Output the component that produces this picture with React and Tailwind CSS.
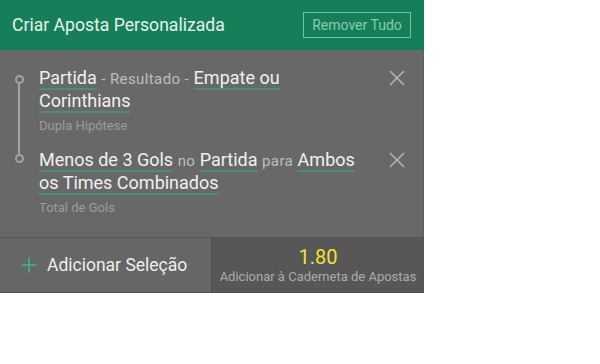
import React from 'react';

const Link = ({ children }) => (
  <span className="text-[#f0f0f0] underline decoration-[#4b8e72] decoration-2 underline-offset-[4px]">
    {children}
  </span>
);

const Muted = ({ children }) => (
  <span className="text-[15px] leading-[16px] tracking-[0.4px] text-[#bdbdbd]">{children}</span>
);

const CloseIcon = () => (
  <svg width="16" height="16" viewBox="0 0 16 16" className="shrink-0">
    <path d="M1.5 1.5 L14.5 14.5 M14.5 1.5 L1.5 14.5" stroke="#b4b4b4" strokeWidth="1.6" strokeLinecap="round" />
  </svg>
);

const Selection = ({ children, market }) => (
  <div className="flex items-start">
    <div className="w-[322px] text-[18px] leading-[23px]">
      <div>{children}</div>
      <div className="mt-[6px] text-[13px] leading-[16px] text-[#9c9c9c]">{market}</div>
    </div>
    <div className="ml-auto mr-[18px] mt-[4px]">
      <CloseIcon />
    </div>
  </div>
);

export default function App() {
  return (
    <div className="w-[600px] h-[364px] bg-white" style={{ fontFamily: 'Roboto, "Liberation Sans", sans-serif' }}>
      <div className="w-[424px]">
        <div className="h-[50px] bg-[#177e5a] flex items-center justify-between pl-[12px] pr-[13px]">
          <span className="text-[17.6px] text-[#e4f2eb]">Criar Aposta Personalizada</span>
          <button className="h-[26px] w-[108px] border border-[#74c3a0] text-[14px] text-[#86cdae]">
            Remover Tudo
          </button>
        </div>

        <div className="relative bg-[#686868] pt-[16px] pb-[21px] pl-[39px] flex flex-col gap-[14px] border-r border-[#5e5e5e]">
          <div className="absolute left-[18px] top-[28px] w-[2px] h-[80px] bg-[#a4a4a4]" />
          <div className="absolute left-[15px] top-[25px] w-[9px] h-[9px] rounded-full border-2 border-[#a4a4a4] bg-[#686868]" />
          <div className="absolute left-[15px] top-[104px] w-[9px] h-[9px] rounded-full border-2 border-[#a4a4a4] bg-[#686868]" />

          <Selection market="Dupla Hipótese">
            <Link>Partida</Link> <Muted>- Resultado -</Muted> <Link>Empate ou Corinthians</Link>
          </Selection>
          <Selection market="Total de Gols">
            <Link>Menos de 3 Gols</Link> <Muted>no</Muted> <Link>Partida</Link> <Muted>para</Muted>{' '}
            <Link>Ambos os Times Combinados</Link>
          </Selection>
        </div>

        <div className="flex h-[56px] border-t border-[#555] border-b border-b-[#505050]">
          <div className="w-[211px] bg-[#666] flex items-center pl-[21px] gap-[10px]">
            <svg width="16" height="16" viewBox="0 0 16 16">
              <path d="M8 0.5 V15.5 M0.5 8 H15.5" stroke="#3fb987" strokeWidth="1.5" />
            </svg>
            <span className="text-[17.5px] text-[#eeeeee]">Adicionar Seleção</span>
          </div>
          <div className="flex-1 bg-[#575757] border-l border-[#4e4e4e] flex flex-col items-center justify-center">
            <span className="text-[20px] leading-[24px] text-[#f2e03a]">1.80</span>
            <span className="text-[13px] leading-[16px] text-[#ababab]">Adicionar à Caderneta de Apostas</span>
          </div>
        </div>
      </div>
    </div>
  );
}
